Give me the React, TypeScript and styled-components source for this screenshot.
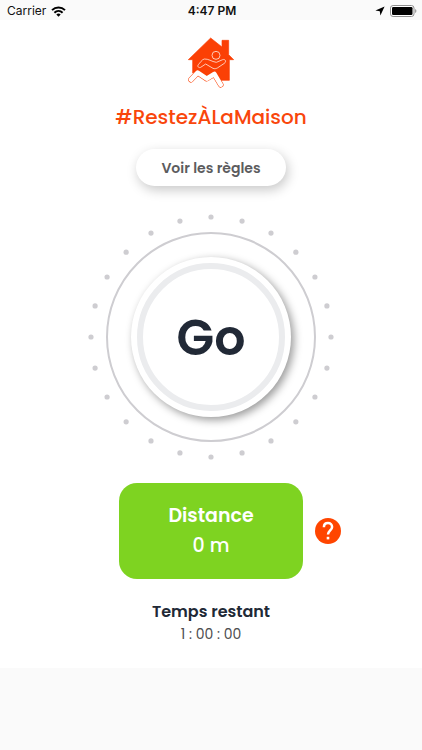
import React from "react";
import styled, { createGlobalStyle } from "styled-components";

const GlobalStyle = createGlobalStyle`
  * { box-sizing: border-box; }
  body {
    margin: 0;
    background: #fafafa;
    font-family: Poppins, Inter, sans-serif;
  }
  button { font-family: inherit; cursor: pointer; }
`;

const Screen = styled.div`
  min-height: 100vh;
  display: flex;
  flex-direction: column;
  background: #fafafa;
`;

const StatusBar = styled.header`
  display: grid;
  grid-template-columns: 1fr auto 1fr;
  align-items: center;
  height: 20px;
  padding: 2px 5px 0 7px;
  font: 400 12px/16px Inter, sans-serif;
  color: #111;
`;

const StatusGroup = styled.div<{ $end?: boolean }>`
  display: flex;
  align-items: center;
  justify-content: ${(p) => (p.$end ? "flex-end" : "flex-start")};
  gap: 5px;
`;

const Clock = styled.time`
  font-weight: 600;
`;

const Main = styled.main`
  display: flex;
  flex-direction: column;
  align-items: center;
  padding: 17px 16px 24px;
  background: #fff;
`;

const Title = styled.h1`
  margin: 13px 0 16px;
  font-size: 20px;
  line-height: 32px;
  font-weight: 500;
  color: #f9460b;
`;

const RulesButton = styled.button`
  min-width: 150px;
  height: 37px;
  padding: 0 24px;
  border: 0;
  border-radius: 19px;
  background: #fff;
  box-shadow: 2px 4px 12px rgba(0, 0, 0, 0.22);
  font-size: 14px;
  line-height: 24px;
  font-weight: 600;
  color: #5c5c5e;
`;

const Dial = styled.div`
  display: grid;
  place-items: center;
  margin: 27px 0 22px;
  > * { grid-area: 1 / 1; }
`;

const GoButton = styled.button`
  display: grid;
  place-items: center;
  width: 160px;
  height: 160px;
  padding: 6px;
  border: 0;
  border-radius: 50%;
  background: #fff;
  box-shadow: 3px 3px 8px rgba(0, 0, 0, 0.4);
`;

const GoFace = styled.span`
  display: grid;
  place-items: center;
  width: 100%;
  height: 100%;
  padding-top: 2px;
  border: 6px solid #ebecee;
  border-radius: 50%;
  font-size: 49px;
  line-height: 56px;
  font-weight: 600;
  color: #212936;
`;

const DistanceRow = styled.section`
  display: grid;
  grid-template-columns: 1fr auto 1fr;
  align-items: center;
  gap: 12px;
  width: 100%;
`;

const DistanceCard = styled.div`
  grid-column: 2;
  display: flex;
  flex-direction: column;
  align-items: center;
  min-width: 184px;
  padding: 18px 24px;
  border-radius: 18px;
  background: #7ed321;
  color: #fff;
`;

const DistanceLabel = styled.h2`
  margin: 0;
  font-size: 19px;
  line-height: 30px;
  font-weight: 600;
`;

const DistanceValue = styled.p`
  margin: 0;
  font-size: 19px;
  line-height: 30px;
  font-weight: 500;
`;

const HelpButton = styled.button`
  justify-self: start;
  display: flex;
  padding: 0;
  border: 0;
  border-radius: 50%;
  background: none;
`;

const Remaining = styled.section`
  display: flex;
  flex-direction: column;
  align-items: center;
  margin-top: 21px;
`;

const RemainingLabel = styled.h2`
  margin: 0;
  font-size: 16px;
  line-height: 24px;
  font-weight: 600;
  color: #212936;
`;

const RemainingTime = styled.p`
  margin: 0;
  font-size: 14px;
  line-height: 20px;
  font-weight: 400;
  color: #4c4c4e;
`;

const Wifi = () => (
  <svg width="15" height="11" viewBox="0 0 15 11" fill="none" stroke="#000" strokeWidth="2" aria-hidden="true">
    <path d="M1 4.1a9.4 9.4 0 0 1 13 0" />
    <path d="M3.4 6.7a6 6 0 0 1 8.2 0" />
    <path d="M7.5 10.8 5.3 8.6a3.2 3.2 0 0 1 4.4 0z" fill="#000" stroke="none" />
  </svg>
);

const LocationArrow = () => (
  <svg width="10" height="10" viewBox="0 0 10 10" aria-hidden="true">
    <path d="M9.6.4 5.4 9.6 4.8 5.2.4 4.6z" fill="#000" />
  </svg>
);

const Battery = () => (
  <svg width="27" height="12" viewBox="0 0 27 12" aria-hidden="true">
    <rect x=".5" y=".5" width="23.5" height="11" rx="2.6" fill="#fff" stroke="#8e8e8e" />
    <rect x="2" y="2" width="20.5" height="8" rx="1.2" fill="#000" />
    <path d="M25.2 4c1.6.5 1.6 3.5 0 4z" fill="#8e8e8e" />
  </svg>
);

const legs = "M32 148 52 127 79 145 102 131 121 163";

const Logo = () => (
  <svg width="46" height="51" viewBox="23 20 138 153" role="img" aria-label="Restez à la maison">
    <path
      d="M91 23 24 88h13v40l15-6 27 22 22-14 12 20h34V88h13l-15-15V30h-20v20z"
      fill="#fb4005"
      stroke="#fb4005"
      strokeWidth="2"
      strokeLinejoin="round"
    />
    <g stroke="#ffe3d9" strokeWidth="2.5" fill="#fb4005" strokeLinejoin="round">
      <circle cx="107" cy="75" r="12" />
      <path d="M72 86c-7 1-13 12-18 17-4 5 1 11 7 8l15-10 22 13c5 2 9 1 13-1l21-14c7-5 3-14-5-11l-19 8c-14-2-24-11-36-10z" />
    </g>
    <g fill="none" strokeLinecap="round" strokeLinejoin="round">
      <path d={legs} stroke="#fb4005" strokeWidth="17" />
      <path d={legs} stroke="#fff" strokeWidth="14" />
    </g>
  </svg>
);

const dots = Array.from({ length: 24 }, (_, i) => {
  const angle = (i * Math.PI) / 12;
  return { x: 124 + 120 * Math.sin(angle), y: 124 - 120 * Math.cos(angle) };
});

const DialTrack = () => (
  <svg width="248" height="248" viewBox="0 0 248 248" aria-hidden="true">
    <circle cx="124" cy="124" r="104" fill="none" stroke="#cecdd1" strokeWidth="2" />
    {dots.map((dot, i) => (
      <circle key={i} cx={dot.x} cy={dot.y} r="2.6" fill="#cecdd1" />
    ))}
  </svg>
);

const HelpIcon = () => (
  <svg width="26" height="26" viewBox="0 0 26 26" aria-hidden="true">
    <circle cx="13" cy="13" r="13" fill="#ff4500" />
    <path
      d="M8.9 9.2C8.9 6.6 10.6 5 13 5s4.1 1.7 4.1 4c0 3.2-4.1 3.8-4.1 7.6"
      fill="none"
      stroke="#fff"
      strokeWidth="2.5"
    />
    <rect x="11.7" y="18.8" width="2.6" height="2.6" fill="#fff" />
  </svg>
);

export default function App() {
  return (
    <Screen>
      <GlobalStyle />
      <StatusBar>
        <StatusGroup>
          <span>Carrier</span>
          <Wifi />
        </StatusGroup>
        <Clock>4:47 PM</Clock>
        <StatusGroup $end>
          <LocationArrow />
          <Battery />
        </StatusGroup>
      </StatusBar>
      <Main>
        <Logo />
        <Title>#RestezÀLaMaison</Title>
        <RulesButton type="button">Voir les règles</RulesButton>
        <Dial>
          <DialTrack />
          <GoButton type="button">
            <GoFace>Go</GoFace>
          </GoButton>
        </Dial>
        <DistanceRow>
          <DistanceCard>
            <DistanceLabel>Distance</DistanceLabel>
            <DistanceValue>0 m</DistanceValue>
          </DistanceCard>
          <HelpButton type="button" aria-label="Aide">
            <HelpIcon />
          </HelpButton>
        </DistanceRow>
        <Remaining>
          <RemainingLabel>Temps restant</RemainingLabel>
          <RemainingTime>1 : 00 : 00</RemainingTime>
        </Remaining>
      </Main>
    </Screen>
  );
}
